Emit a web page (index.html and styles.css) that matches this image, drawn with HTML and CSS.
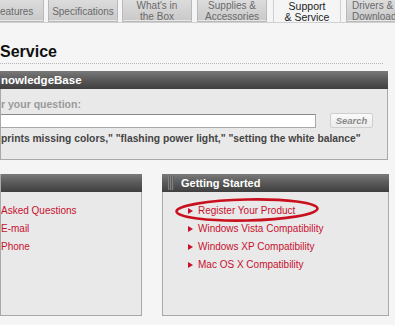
FILE: index.html
```html
<!DOCTYPE html>
<html>
<head>
<meta charset="utf-8">
<link rel="stylesheet" href="styles.css">
</head>
<body>
<nav class="tabs">
  <div class="tab first"><span class="cut">eatures</span></div>
  <div class="tab">Specifications</div>
  <div class="tab">What's in<br>the Box</div>
  <div class="tab">Supplies &amp;<br>Accessories</div>
  <div class="tab active">Support<br>&amp; Service</div>
  <div class="tab last">Drivers &amp;<br>Download</div>
</nav>
<main class="content">
  <h1 class="title">Service</h1>
  <div class="dots"></div>
  <section class="panel kb">
    <div class="phead">nowledgeBase</div>
    <div class="pbody kb-body">
      <div class="ask">r your question:</div>
      <div class="row">
        <div class="input"></div>
        <div class="btn">Search</div>
      </div>
      <div class="ex">prints missing colors," "flashing power light," "setting the white balance"</div>
    </div>
  </section>
  <div class="cols">
    <section class="panel leftp">
      <div class="phead"></div>
      <ul class="pbody links plain">
        <li>Asked Questions</li>
        <li>E-mail</li>
        <li>Phone</li>
      </ul>
    </section>
    <section class="panel rightp">
      <div class="phead"><span class="grip"></span>Getting Started</div>
      <ul class="pbody links arrows">
        <li>Register Your Product</li>
        <li>Windows Vista Compatibility</li>
        <li>Windows XP Compatibility</li>
        <li>Mac OS X Compatibility</li>
      </ul>
      <svg class="ring" width="146" height="28" viewBox="0 0 146 28"><ellipse cx="73" cy="14" rx="70.5" ry="10.5" fill="none" stroke="#c8101e" stroke-width="2.6" transform="rotate(-1.2 73 14)"/></svg>
    </section>
  </div>
</main>
</body>
</html>
```
FILE: styles.css
```css
* { box-sizing: border-box; }
html, body { margin: 0; padding: 0; }
body {
  width: 395px;
  height: 325px;
  overflow: hidden;
  background: #f5f5f5;
  font-family: "Liberation Sans", Arial, sans-serif;
}
.tabs {
  display: flex;
  gap: 4px;
  height: 23px;
  border-bottom: 1px solid #cfcfcf;
  background: #f5f5f5;
}
.tab {
  flex: 0 0 70px;
  height: 22px;
  background: linear-gradient(#dcdcdc, #c9c9c9);
  border: 1px solid #b9b9b9;
  border-top: none;
  color: #6a6a6a;
  font-size: 10px;
  line-height: 11px;
  text-align: center;
  display: flex;
  align-items: center;
  justify-content: center;
  box-shadow: inset 0 -1px 0 #e8e8e8;
  padding-top: 1px;
}
.tab.first {
  flex-basis: 44px;
  border-left: none;
  justify-content: flex-start;
}
.tab:nth-child(4) { margin-left: 1px; }
.tab.active {
  background: #f5f5f5;
  color: #222;
  height: 23px;
  margin-left: 2px;
  flex-basis: 68px;
  border-color: #d0d0d0;
  box-shadow: none;
  font-size: 10.5px;
}
.tab.last { flex: 0 0 60px; margin-left: 1px; border-right: none; justify-content: flex-start; padding-left: 5px; text-align: left; }
.content { padding: 0 7px 0 0; }
.title {
  margin: 0;
  padding-top: 19px;
  height: 40px;
  font-size: 16px;
  line-height: 20px;
  letter-spacing: 0;
  font-weight: bold;
  color: #111;
}
.dots {
  border-top: 1px dotted #b5b5b5;
  margin-right: 5px;
}
.panel {
  background: #e9e9e9;
  border: 1px solid #a9a9a9;
  border-top: none;
  position: relative;
}
.kb { margin-top: 7px; height: 89px; }
.phead {
  height: 18px;
  background: linear-gradient(#7a7a7a, #5c5c5c 45%, #3f3f3f);
  color: #fff;
  font-weight: bold;
  font-size: 11px;
  line-height: 18px;
  padding-left: 1px;
  display: flex;
  align-items: center;
  margin: 0 -1px;
}
.kb .phead { font-size: 11.5px; }
.kb-body { padding-top: 8px; }
.ask {
  color: #9a9a9a;
  font-weight: bold;
  font-size: 10.5px;
  line-height: 14px;
}
.row {
  display: flex;
  align-items: center;
  margin-top: 2px;
  height: 15px;
}
.input {
  width: 315px;
  height: 14px;
  background: #fff;
  border: 1px solid #a8a8a8;
  border-left: none;
  border-top-color: #8a8a8a;
}
.btn {
  margin-left: 14px;
  width: 43px;
  height: 15px;
  background: linear-gradient(#fafafa, #ececec);
  border: 1px solid #cfcfcf;
  border-radius: 2px;
  color: #8a8a8a;
  font-style: italic;
  font-weight: bold;
  font-size: 9.5px;
  line-height: 13px;
  text-align: center;
}
.ex {
  margin-top: 4px;
  color: #444;
  font-weight: bold;
  font-size: 10.3px;
  line-height: 14px;
  white-space: nowrap;
}
.cols {
  display: flex;
  gap: 20px;
  margin-top: 14px;
}
.leftp { flex: 0 0 142px; height: 142px; }
.rightp { flex: 0 0 227px; height: 142px; }
.leftp .phead { margin-left: 0; }
.links {
  list-style: none;
  margin: 0;
  padding: 10px 0 0 0;
  color: #c8102e;
  font-size: 10px;
  line-height: 18px;
}
.arrows { padding-left: 24px; }
.arrows li { position: relative; padding-left: 11px; }
.arrows li::before {
  content: "";
  position: absolute;
  left: 1px;
  top: 6px;
  border-left: 5px solid #c8102e;
  border-top: 3px solid transparent;
  border-bottom: 3px solid transparent;
}
.grip {
  width: 6px;
  height: 14px;
  margin: 0 7px 0 5px;
  background: repeating-linear-gradient(90deg, #8a8a8a 0 1px, #5a5a5a 1px 2px);
  opacity: 0.8;
}
.ring {
  position: absolute;
  left: 11px;
  top: 22px;
}
```
